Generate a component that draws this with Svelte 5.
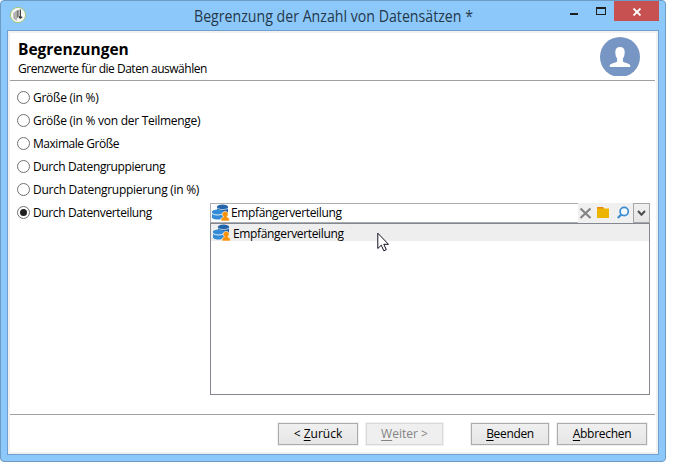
<script>
  const options = [
    { label: 'Größe (in %)', spacing: -0.27 },
    { label: 'Größe (in % von der Teilmenge)', spacing: -0.27 },
    { label: 'Maximale Größe', spacing: -0.47 },
    { label: 'Durch Datengruppierung', spacing: -0.37 },
    { label: 'Durch Datengruppierung (in %)', spacing: -0.27 },
    { label: 'Durch Datenverteilung', spacing: -0.38 }
  ];
  let selected = $state(5);
</script>

{#snippet database()}
  <svg class="db" width="18" height="17" viewBox="0 0 18 17">
    <path d="M5 3v5.500c1 2.300 10 2.300 11 0V3z" fill="#2464a8" />
    <ellipse cx="10.500" cy="3" rx="5.600" ry="2.500" fill="#2464a8" />
    <path d="M5 3.900c1.500 2.200 9.500 2.200 11.200 0" fill="none" stroke="#d5e6f6" stroke-width=".8" />
    <path d="M0 7.800v5.700c1 2.800 10 2.800 11 0V7.800z" fill="#348cd6" />
    <ellipse cx="5.500" cy="7.800" rx="5.700" ry="2.300" fill="#348cd6" />
    <path d="M0 9.300c2 2.200 9 2.200 11 0" fill="none" stroke="#fff" stroke-width=".9" />
    <path d="M9 17v-2.500c.5-1 2-.8 2.500-1.700a3 3 0 1 1 3.300 0c.5.900 2 .7 2.500 1.700V17z" fill="#f7920a" stroke="#fff" stroke-width=".6" />
  </svg>
{/snippet}

<div class="window">
  <header class="titlebar">
    <svg class="app" width="18" height="18" viewBox="0 0 18 18">
      <circle cx="9" cy="9" r="7.600" fill="#f7f7f3" stroke="#a6c77b" />
      <path d="M4.200 7l3.500-2.500v8.500l-3.500-.5z" fill="#b2b2ae" />
      <path d="M7.700 4.500l2-.5v6l-2 3z" fill="#777" />
      <path d="M11.300 3.500v8.200M9.800 10.500l1.500 1.700 1.900-1.500" fill="none" stroke="#333" stroke-width="1.200" />
      <path d="M5 12.500l3 1.600" stroke="#999" />
    </svg>
    <h1>Begrenzung der Anzahl von Datensätzen *</h1>
    <div class="controls">
      <svg width="44" height="20" viewBox="0 0 44 20" shape-rendering="crispEdges">
        <path d="M0 12h8v2H0z" fill="#1e1e1e" />
        <path d="M26 6h10v8H26zM27 8v5h8V8z" fill="#1e1e1e" fill-rule="evenodd" />
      </svg>
      <button class="close" aria-label="Schließen">
        <svg width="10" height="8" viewBox="0 0 10 8"><path d="M1.500 .5l7 7m0-7l-7 7" stroke="#fff" stroke-width="1.800" /></svg>
      </button>
    </div>
  </header>

  <main class="client">
    <section class="heading">
      <div>
        <h2>Begrenzungen</h2>
        <p>Grenzwerte für die Daten auswählen</p>
      </div>
      <svg width="40" height="39" viewBox="0 0 40 39">
        <circle cx="20" cy="20" r="20" fill="#7896c4" />
        <path d="M15.300 15c0-3.400 1.700-5 4.700-5s4.700 1.600 4.700 5c0 3-.7 5.200-1.800 6.500v3c1.200 1.400 7.300 1.800 7.300 4V30H9.800v-1.500c0-2.200 6.100-2.600 7.300-4v-3c-1.100-1.300-1.800-3.500-1.800-6.500z" fill="#fff" />
      </svg>
    </section>

    <section class="body">
      <div class="options">
        {#each options as option, i}
          <label style:letter-spacing="{option.spacing}px">
            <input type="radio" name="limit" value={i} bind:group={selected} />{option.label}
          </label>
        {/each}
      </div>
      <div class="picker">
        <div class="combo">
          {@render database()}
          <span>Empfängerverteilung</span>
          <div class="tools">
            <svg width="55" height="19" viewBox="0 0 55 19">
              <path d="M2.500 5.500l10 9.500m0-9.500l-10 9.500" stroke="#858585" stroke-width="2.300" />
              <path d="M19 4h6l1 1.500h5V15H19z" fill="#edb500" />
              <path d="M19 4h6l1 1.500h-7z" fill="#ea8517" />
              <path d="M26 5.500h5" stroke="#f3d36a" />
              <circle cx="46.200" cy="8.500" r="4.100" fill="#f6faff" stroke="#3c8cd2" stroke-width="1.700" />
              <path d="M43.500 11.300L39.800 15" stroke="#3c8cd2" stroke-width="2.200" />
            </svg>
          </div>
          <button class="arrow" aria-label="Öffnen">
            <svg width="9" height="7" viewBox="0 0 9 7"><path d="M1 1l3.500 3.700L8 1" fill="none" stroke="#4d4d4d" stroke-width="2" /></svg>
          </button>
        </div>
        <div class="list">
          <div class="item">{@render database()}<span>Empfängerverteilung</span></div>
          <svg class="cursor" width="13" height="20" viewBox="0 0 13 20">
            <path d="M.8 1.200v15.300l3.500-3.300 2.500 5.600 2.500-1.100-2.500-5.400h4.700z" fill="#fff" stroke="#111122" stroke-width="1" />
          </svg>
        </div>
      </div>
    </section>

    <footer>
      <button class="back">&lt; <u>Z</u>urück</button>
      <button class="next" disabled><u>W</u>eiter &gt;</button>
      <button class="finish"><u>B</u>eenden</button>
      <button class="cancel"><u>A</u>bbrechen</button>
    </footer>
  </main>
</div>

<style>
  :global(body) {
    background: #fff;
    overflow: hidden;
  }
  .window, .window * { box-sizing: border-box; }
  .window {
    width: 666px;
    height: 462px;
    padding: 0 6px 6px;
    border: 1px solid #6c9bc6;
    border-radius: 4px;
    background: #8dc8fb;
    color: #000;
    font: 12px/16px "Open Sans", "Noto Sans", sans-serif;
    display: flex;
    flex-direction: column;
  }
  svg { display: block; flex: none; }
  h1, h2, p { margin: 0; }
  button { font: inherit; padding: 0; border-radius: 0; }
  .titlebar {
    height: 29px;
    display: flex;
    align-items: flex-start;
  }
  .app { margin: 5px 0 0 2px; }
  h1 {
    width: 340px;
    margin: 4px 0 0 167px;
    font-size: 16px;
    line-height: 22px;
    font-weight: 400;
    color: #24384a;
    white-space: nowrap;
    transform: scaleX(0.885);
    transform-origin: left;
  }
  .controls { display: flex; margin-left: auto; }
  .close {
    width: 45px;
    height: 20px;
    border: 0;
    background: #c75050;
    display: grid;
    place-items: center;
  }
  .close svg { margin-top: 2px; }
  .client {
    width: 652px;
    height: 425px;
    border: 1px solid #6e9fcf;
    outline: 2px solid #f0f0f0;
    outline-offset: -3px;
    background: #fff;
    padding: 2px 3px 2px 2px;
    display: flex;
    flex-direction: column;
  }
  .heading {
    height: 48px;
    border-bottom: 1px solid #a0a0a0;
    padding: 4px 15px 0 8px;
    display: flex;
    justify-content: space-between;
  }
  h2 { font-size: 15.500px; line-height: 22px; letter-spacing: 0; margin-top: 1px; }
  p { line-height: 18px; letter-spacing: -0.48px; }
  .body { height: 333px; display: flex; padding: 5px 5px 0 7px; }
  .options { width: 193px; display: flex; flex-direction: column; }
  label {
    height: 23px;
    display: flex;
    align-items: center;
    gap: 3px;
    white-space: nowrap;
  }
  input {
    appearance: none;
    width: 13px;
    height: 13px;
    margin: 0;
    border: 1px solid #707070;
    border-radius: 50%;
    background: #fff;
    display: grid;
    place-items: center;
    flex: none;
  }
  input:checked::before {
    content: "";
    width: 7px;
    height: 7px;
    border-radius: 50%;
    background: #202020;
  }
  .picker { width: 440px; padding-top: 117px; }
  .combo {
    height: 20px;
    border: 1px solid #abadb3;
    border-right: 0;
    display: flex;
    align-items: center;
  }
  .combo .db { margin: -2px 0 0 1px; }
  .picker span { margin-left: 2px; letter-spacing: -0.35px; line-height: 17px; }
  .combo span { margin: -2px 0 0 1px; }
  .tools {
    margin-left: auto;
    height: 20px;
    background: #f0f0f0;
  }
  .arrow {
    width: 17px;
    height: 20px;
    border: 1px solid #a5a5a5;
    background: linear-gradient(#f0f0f0, #e5e5e5);
    display: grid;
    place-items: center;
  }
  .list { height: 172px; border: 1px solid #828790; position: relative; }
  .item { height: 17px; background: #eee; display: flex; align-items: center; padding-left: 2px; }
  .item span { padding-top: 1px; }
  .cursor { position: absolute; left: 166px; top: 8px; }
  footer {
    border-top: 1px solid #a0a0a0;
    display: flex;
    padding: 8px 8px 0 268px;
  }
  footer button {
    height: 22px;
    border: 1px solid #acacac;
    background: linear-gradient(#f0f0f0, #e5e5e5);
    box-shadow: 0 0 0 1px #f0f0f0;
    color: #000;
    line-height: 18px;
  }
  footer button:disabled { color: #838383; border-color: #d9d9d9; background: #efefef; }
  u { text-underline-offset: 2px; }
  .back { width: 80px; }
  .next { width: 77px; margin-left: 8px; }
  .finish { width: 78px; margin-left: 28px; letter-spacing: -0.35px; }
  .cancel { width: 90px; margin-left: 8px; letter-spacing: -0.3px; }
</style>
